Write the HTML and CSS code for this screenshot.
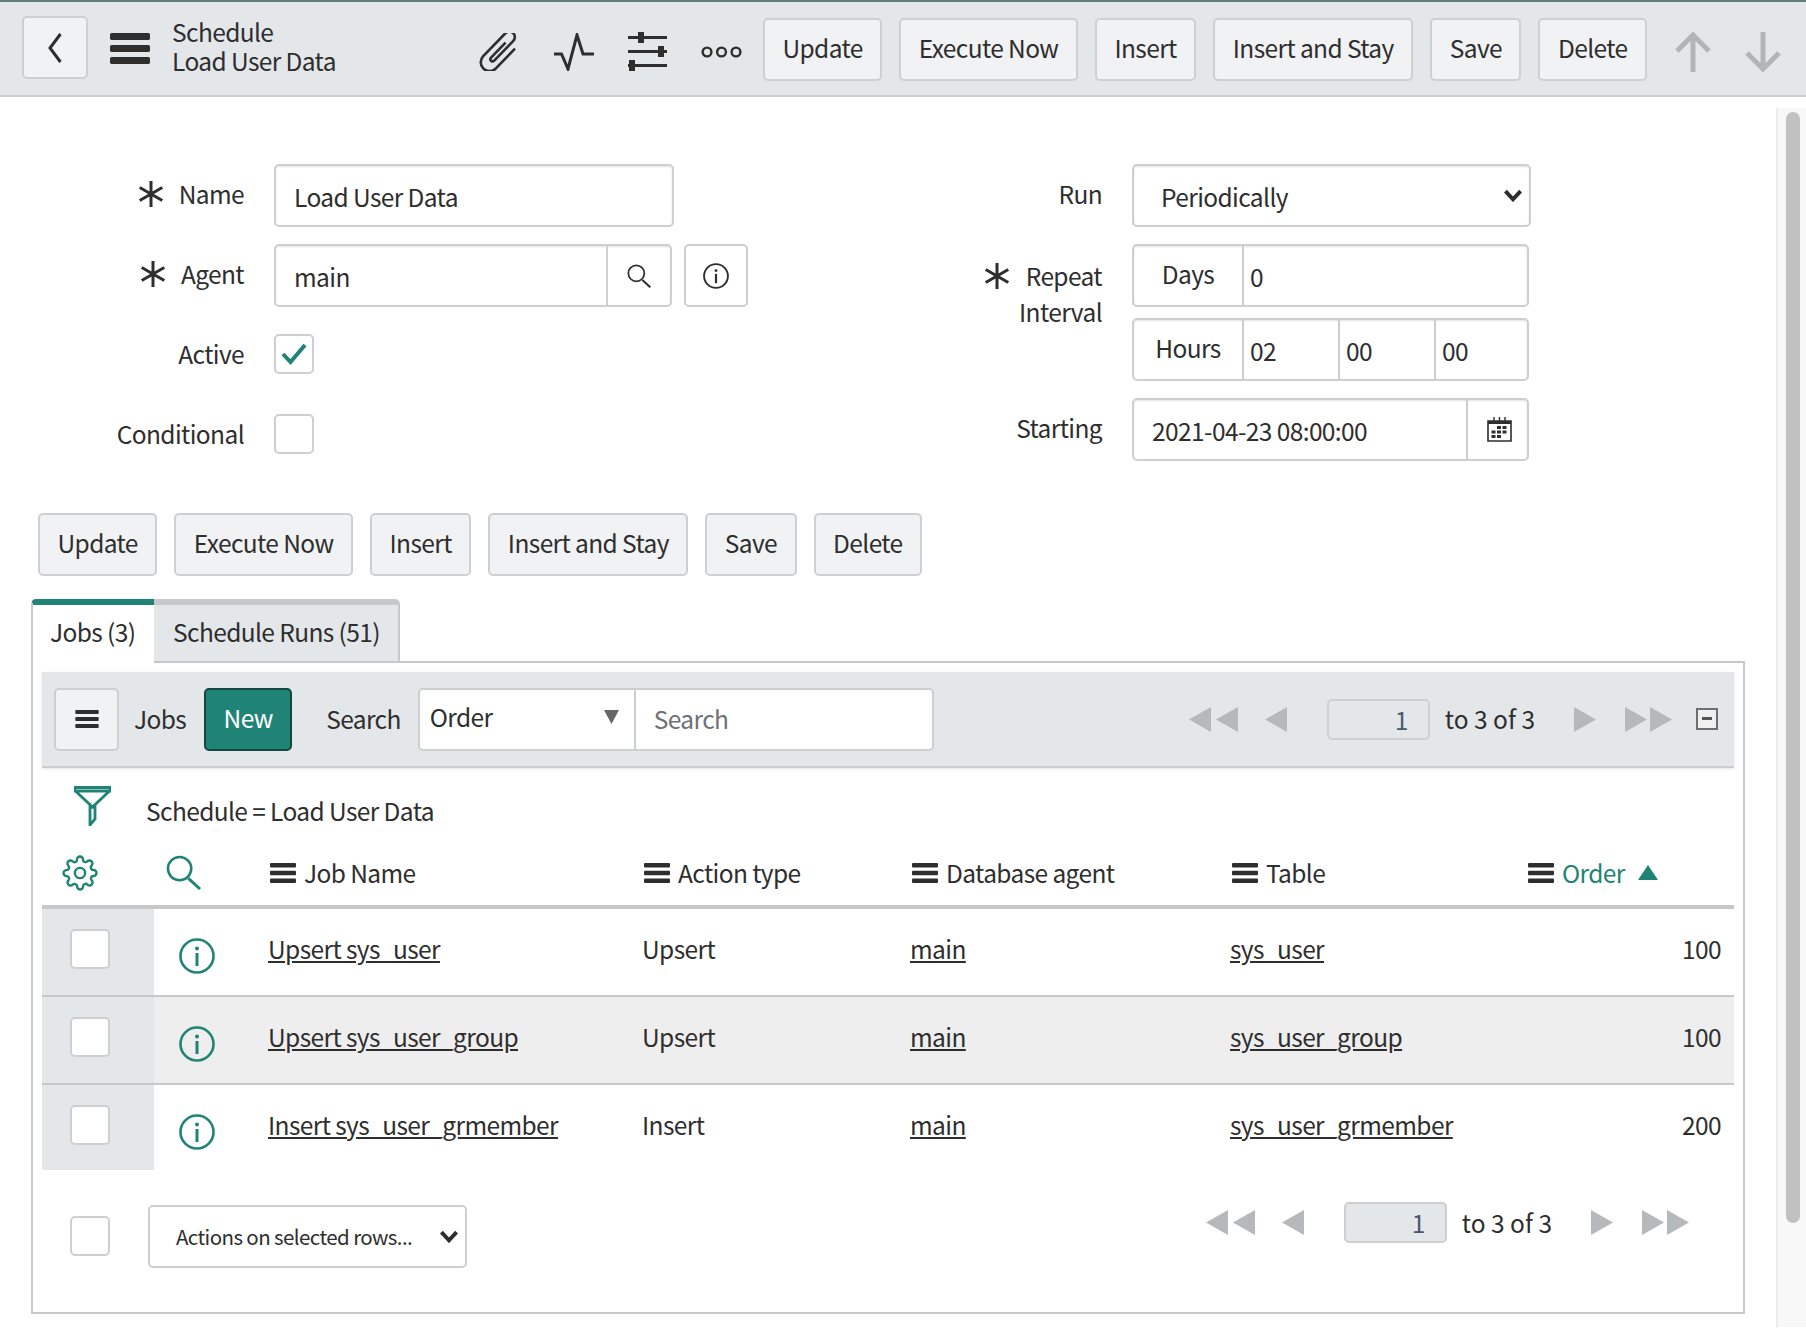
FILE: index.html
```html
<!DOCTYPE html>
<html lang="en">
<head>
    <meta charset="UTF-8">
    <title>Schedule - Load User Data</title>
    <link rel="stylesheet" href="styles.css">
</head>
<body>
    <svg class="sprite" aria-hidden="true">
        <symbol id="i-bars" viewBox="0 0 26 20">
            <rect x="0" y="0" width="26" height="4.4" rx="1"/>
            <rect x="0" y="7.8" width="26" height="4.4" rx="1"/>
            <rect x="0" y="15.6" width="26" height="4.4" rx="1"/>
        </symbol>
        <symbol id="i-star" viewBox="0 0 26 26">
            <path d="M13 0V26M1.7 6.5L24.3 19.5M1.7 19.5L24.3 6.5" fill="none" stroke="currentColor" stroke-width="3"/>
        </symbol>
        <symbol id="i-info" viewBox="0 0 36 36">
            <circle cx="18" cy="18" r="16.5" fill="none" stroke="currentColor" stroke-width="2.6"/>
            <circle cx="18" cy="10.5" r="2"/>
            <rect x="16.5" y="15" width="3" height="13"/>
        </symbol>
        <symbol id="i-search" viewBox="0 0 36 36">
            <circle cx="14" cy="14" r="12" fill="none" stroke="currentColor" stroke-width="2.6"/>
            <path d="M23 24L35 35" fill="none" stroke="currentColor" stroke-width="3"/>
        </symbol>
        <symbol id="i-chevron" viewBox="0 0 18 12">
            <path d="M2 2L9 9.5L16 2" fill="none" stroke="currentColor" stroke-width="3.6"/>
        </symbol>
        <symbol id="i-left2" viewBox="0 0 49 25">
            <path d="M0 12.5L22 0V25ZM27 12.5L49 0V25Z"/>
        </symbol>
        <symbol id="i-left" viewBox="0 0 22 25">
            <path d="M0 12.5L22 0V25Z"/>
        </symbol>
        <symbol id="i-right" viewBox="0 0 22 25">
            <path d="M22 12.5L0 0V25Z"/>
        </symbol>
        <symbol id="i-right2" viewBox="0 0 47 25">
            <path d="M22 12.5L0 0V25ZM47 12.5L25 0V25Z"/>
        </symbol>
    </svg>

    <header class="topbar">
        <button class="btn back-btn">
            <svg width="16" height="32" viewBox="0 0 16 32"><path d="M13.5 2L3 16L13.5 30" fill="none" stroke="#2e2e2e" stroke-width="3"/></svg>
        </button>
        <svg class="top-menu" width="40" height="31"><use href="#i-bars"/></svg>
        <div class="title">
            <div>Schedule</div>
            <div>Load User Data</div>
        </div>
        <div class="top-icons">
            <svg width="41" height="38" viewBox="0 0 41 38">
                <g transform="translate(20.5 19) rotate(44) scale(1.1) translate(-20 -22)" fill="none" stroke="#2e2e2e" stroke-width="2.4">
                    <path d="M28 10V35a8 8 0 0 1-16 0V6a5 5 0 0 1 10 0V31a2 2 0 0 1-4 0V12"/>
                </g>
            </svg>
            <svg width="40" height="38" viewBox="0 0 40 38"><path d="M0 21H7.5L14 36L23 2L29 21H40" fill="none" stroke="#2e2e2e" stroke-width="3"/></svg>
            <svg width="39" height="39" viewBox="0 0 39 39" fill="#2e2e2e">
                <rect x="0" y="4" width="39" height="3"/><rect x="10" y="0" width="6" height="11"/>
                <rect x="0" y="18" width="39" height="3"/><rect x="30" y="14" width="6" height="11"/>
                <rect x="0" y="32" width="39" height="3"/><rect x="1" y="28" width="6" height="11"/>
            </svg>
            <svg width="41" height="12" viewBox="0 0 41 12" fill="none" stroke="#2e2e2e" stroke-width="2.4">
                <circle cx="6" cy="6" r="4.4"/><circle cx="20.500" cy="6" r="4.4"/><circle cx="35" cy="6" r="4.4"/>
            </svg>
        </div>
        <div class="btn-row top-actions">
            <button class="btn">Update</button>
            <button class="btn">Execute Now</button>
            <button class="btn">Insert</button>
            <button class="btn">Insert and Stay</button>
            <button class="btn">Save</button>
            <button class="btn">Delete</button>
        </div>
        <div class="nav-arrows">
            <svg width="36" height="40" viewBox="0 0 36 40"><path d="M18 40V3M2 19L18 3L34 19" fill="none" stroke="#b2b5b8" stroke-width="5"/></svg>
            <svg width="36" height="40" viewBox="0 0 36 40"><path d="M18 0V37M2 21L18 37L34 21" fill="none" stroke="#b2b5b8" stroke-width="5"/></svg>
        </div>
    </header>

    <div class="workspace">
        <main class="main">
            <section class="form">
                <div class="form-left">
                    <div class="field">
                        <label class="field-label"><svg class="req"><use href="#i-star"/></svg>Name</label>
                        <div class="box name-box"><span class="box-text">Load User Data</span></div>
                    </div>
                    <div class="field">
                        <label class="field-label"><svg class="req"><use href="#i-star"/></svg>Agent</label>
                        <div class="box agent-box">
                            <span class="box-text">main</span>
                            <span class="box-addon"><svg width="24" height="24"><use href="#i-search"/></svg></span>
                        </div>
                        <div class="box info-box"><svg width="26" height="26"><use href="#i-info"/></svg></div>
                    </div>
                    <div class="field">
                        <label class="field-label">Active</label>
                        <div class="check">
                            <svg width="26" height="22" viewBox="0 0 26 22"><path d="M2 11L9.500 19L24 2" fill="none" stroke="#1f8476" stroke-width="4"/></svg>
                        </div>
                    </div>
                    <div class="field">
                        <label class="field-label">Conditional</label>
                        <div class="check"></div>
                    </div>
                </div>
                <div class="form-right">
                    <div class="field">
                        <label class="field-label">Run</label>
                        <div class="box run-box">
                            <span class="box-text run-text">Periodically</span>
                            <svg class="chevron" width="20" height="13"><use href="#i-chevron"/></svg>
                        </div>
                    </div>
                    <div class="field interval-field">
                        <label class="field-label interval-label"><svg class="req"><use href="#i-star"/></svg>Repeat<br>Interval</label>
                        <div class="interval-boxes">
                            <div class="box time-box">
                                <span class="time-name">Days</span>
                                <span class="time-part">0</span>
                            </div>
                            <div class="box time-box">
                                <span class="time-name">Hours</span>
                                <span class="time-part time-small">02</span>
                                <span class="time-part time-small">00</span>
                                <span class="time-part">00</span>
                            </div>
                        </div>
                    </div>
                    <div class="field">
                        <label class="field-label">Starting</label>
                        <div class="box time-box">
                            <span class="box-text start-text">2021-04-23 08:00:00</span>
                            <span class="box-addon cal-addon">
                                <svg width="25" height="25" viewBox="0 0 25 25" fill="#2e2e2e">
                                    <path d="M1 4H24V24H1Z" fill="none" stroke="#2e2e2e" stroke-width="1.600"/>
                                    <rect x="1" y="4" width="23" height="3"/>
                                    <path d="M7 0V5M12.500 0V5M18 0V5" stroke="#2e2e2e" stroke-width="1.400"/>
                                    <rect x="10" y="9" width="4" height="3"/><rect x="15.500" y="9" width="4" height="3"/>
                                    <rect x="4.500" y="13.500" width="4" height="3"/><rect x="10" y="13.500" width="4" height="3"/><rect x="15.500" y="13.500" width="4" height="3"/>
                                    <rect x="4.500" y="18" width="4" height="3"/><rect x="10" y="18" width="4" height="3"/>
                                </svg>
                            </span>
                        </div>
                    </div>
                </div>
            </section>

            <div class="btn-row bottom-actions">
                <button class="btn">Update</button>
                <button class="btn">Execute Now</button>
                <button class="btn">Insert</button>
                <button class="btn">Insert and Stay</button>
                <button class="btn">Save</button>
                <button class="btn">Delete</button>
            </div>

            <nav class="tabs">
                <div class="tab tab-active">Jobs (3)</div>
                <div class="tab">Schedule Runs (51)</div>
            </nav>

            <section class="panel">
                <div class="list-bar">
                    <button class="btn list-menu"><svg width="24" height="18"><use href="#i-bars"/></svg></button>
                    <span class="list-title">Jobs</span>
                    <button class="btn new-btn">New</button>
                    <span class="search-label">Search</span>
                    <div class="search-group">
                        <div class="search-col">
                            <span>Order</span>
                            <svg width="15" height="14" viewBox="0 0 15 14"><path d="M0 0H15L7.500 14Z" fill="#666"/></svg>
                        </div>
                        <div class="search-input">Search</div>
                    </div>
                    <div class="pager">
                        <svg class="tri2"><use href="#i-left2"/></svg>
                        <svg class="tri"><use href="#i-left"/></svg>
                        <div class="page-input">1</div>
                        <span class="page-text">to 3 of 3</span>
                        <svg class="tri"><use href="#i-right"/></svg>
                        <svg class="tri2"><use href="#i-right2"/></svg>
                    </div>
                    <div class="collapse-box"></div>
                </div>

                <div class="filter-row">
                    <svg width="37" height="40" viewBox="0 0 37 40" fill="none" stroke="#1f8476" stroke-width="2.800">
                        <path d="M1 1.500H36V5H1ZM1.500 5L18.500 21L35.500 5"/>
                        <path d="M16 21H21V33L16 39Z"/>
                    </svg>
                    <span>Schedule = Load User Data</span>
                </div>

                <table class="jobs">
                    <colgroup>
                        <col class="col-check"><col class="col-info"><col class="col-name">
                        <col class="col-action"><col class="col-agent"><col class="col-table"><col class="col-order">
                    </colgroup>
                    <thead>
                        <tr>
                            <th class="gear-cell">
                                <svg class="gear" width="36" height="36" viewBox="0 0 24 24" fill="none" stroke="#1f8476" stroke-width="1.600">
                                    <circle cx="12" cy="12" r="3.400"/>
                                    <path d="M19.4 15a1.65 1.65 0 0 0 .33 1.82l.06.06a2 2 0 0 1 0 2.83 2 2 0 0 1-2.83 0l-.06-.06a1.65 1.65 0 0 0-1.82-.33 1.65 1.65 0 0 0-1 1.51V21a2 2 0 0 1-2 2 2 2 0 0 1-2-2v-.09A1.65 1.65 0 0 0 9 19.4a1.65 1.65 0 0 0-1.82.33l-.06.06a2 2 0 0 1-2.83 0 2 2 0 0 1 0-2.83l.06-.06a1.65 1.65 0 0 0 .33-1.82 1.65 1.65 0 0 0-1.51-1H3a2 2 0 0 1-2-2 2 2 0 0 1 2-2h.09A1.65 1.65 0 0 0 4.600 9a1.65 1.65 0 0 0-.33-1.82l-.06-.06a2 2 0 0 1 0-2.83 2 2 0 0 1 2.83 0l.06.06a1.65 1.65 0 0 0 1.82.33H9a1.65 1.65 0 0 0 1-1.51V3a2 2 0 0 1 2-2 2 2 0 0 1 2 2v.09a1.65 1.65 0 0 0 1 1.51 1.65 1.65 0 0 0 1.82-.33l.06-.06a2 2 0 0 1 2.83 0 2 2 0 0 1 0 2.83l-.06.06a1.65 1.65 0 0 0-.33 1.82V9a1.65 1.65 0 0 0 1.51 1H21a2 2 0 0 1 2 2 2 2 0 0 1-2 2h-.09a1.65 1.65 0 0 0-1.51 1z"/>
                                </svg>
                            </th>
                            <th class="find-cell"><svg class="teal" width="35" height="35"><use href="#i-search"/></svg></th>
                            <th><span class="th-in"><svg width="26" height="20"><use href="#i-bars"/></svg>Job Name</span></th>
                            <th><span class="th-in"><svg width="26" height="20"><use href="#i-bars"/></svg>Action type</span></th>
                            <th><span class="th-in"><svg width="26" height="20"><use href="#i-bars"/></svg>Database agent</span></th>
                            <th><span class="th-in"><svg width="26" height="20"><use href="#i-bars"/></svg>Table</span></th>
                            <th><span class="th-in sorted"><svg width="26" height="20"><use href="#i-bars"/></svg>Order<i class="sort-up"></i></span></th>
                        </tr>
                    </thead>
                    <tbody>
                        <tr>
                            <td class="check-cell"><div class="check"></div></td>
                            <td class="info-cell"><svg class="teal" width="36" height="36"><use href="#i-info"/></svg></td>
                            <td><a href="#">Upsert sys_user</a></td>
                            <td>Upsert</td>
                            <td><a href="#">main</a></td>
                            <td><a href="#">sys_user</a></td>
                            <td class="num">100</td>
                        </tr>
                        <tr>
                            <td class="check-cell"><div class="check"></div></td>
                            <td class="info-cell"><svg class="teal" width="36" height="36"><use href="#i-info"/></svg></td>
                            <td><a href="#">Upsert sys_user_group</a></td>
                            <td>Upsert</td>
                            <td><a href="#">main</a></td>
                            <td><a href="#">sys_user_group</a></td>
                            <td class="num">100</td>
                        </tr>
                        <tr>
                            <td class="check-cell"><div class="check"></div></td>
                            <td class="info-cell"><svg class="teal" width="36" height="36"><use href="#i-info"/></svg></td>
                            <td><a href="#">Insert sys_user_grmember</a></td>
                            <td>Insert</td>
                            <td><a href="#">main</a></td>
                            <td><a href="#">sys_user_grmember</a></td>
                            <td class="num">200</td>
                        </tr>
                    </tbody>
                </table>

                <div class="list-foot">
                    <div class="check"></div>
                    <div class="box actions-box">
                        <span>Actions on selected rows...</span>
                        <svg class="chevron" width="20" height="13"><use href="#i-chevron"/></svg>
                    </div>
                    <div class="pager foot-pager">
                        <svg class="tri2"><use href="#i-left2"/></svg>
                        <svg class="tri"><use href="#i-left"/></svg>
                        <div class="page-input">1</div>
                        <span class="page-text">to 3 of 3</span>
                        <svg class="tri"><use href="#i-right"/></svg>
                        <svg class="tri2"><use href="#i-right2"/></svg>
                    </div>
                </div>
            </section>
        </main>

        <aside class="scrollbar"><div class="thumb"></div></aside>
    </div>
</body>
</html>
```

FILE: styles.css
```css
* {
    box-sizing: border-box;
}
html, body {
    margin: 0;
    height: 1340px;
    overflow: hidden;
}
body {
    font-family: "Noto Sans CJK SC", "Open Sans", sans-serif;
    font-size: 24.5px;
    letter-spacing: -0.6px;
    line-height: 36px;
    color: #2e2e2e;
    background-color: white;
}
.sprite {
    display: none;
}
svg {
    display: block;
    flex: none;
}
use {
    fill: currentColor;
}
.teal {
    color: #1f8476;
}

/* buttons */
.btn {
    font: inherit;
    letter-spacing: inherit;
    color: inherit;
    height: 63px;
    padding: 0 17.5px 3px;
    background-color: #f1f2f4;
    border: 2px solid #cdcfd1;
    border-radius: 5px;
    white-space: nowrap;
}
.btn-row {
    display: flex;
    gap: 17px;
}

/* top bar */
.topbar {
    display: flex;
    align-items: flex-start;
    height: 97px;
    padding: 14px 0 0 22px;
    background-color: #e4e7ea;
    border-top: 2px solid #5f8277;
    border-bottom: 2px solid #cbcdcf;
}
.back-btn {
    display: flex;
    align-items: center;
    justify-content: center;
    width: 66px;
    padding: 0;
}
.top-menu {
    margin: 17px 0 0 22px;
}
.title {
    margin: 1px 0 0 22px;
    line-height: 29px;
}
.top-icons {
    display: flex;
    align-items: center;
    gap: 34px;
    height: 39px;
    margin: 16px 0 0 auto;
}
.top-actions {
    margin: 2px 0 0 21px;
}
.nav-arrows {
    display: flex;
    gap: 34px;
    margin: 16px 25px 0 28px;
}

/* form */
.workspace {
    display: flex;
}
.main {
    width: 1776px;
    flex: none;
}
.form {
    display: flex;
    padding-top: 67px;
}
.form-left {
    display: flex;
    flex-direction: column;
    gap: 17px;
    width: 840px;
}
.form-right {
    display: flex;
    flex-direction: column;
    gap: 17px;
}
.field {
    display: flex;
    align-items: flex-start;
    min-height: 63px;
}
.field-label {
    display: flex;
    align-items: center;
    justify-content: flex-end;
    gap: 15px;
    width: 244px;
    height: 60px;
    margin-right: 30px;
}
.form-right .field-label {
    width: 262px;
    margin-right: 30px;
}
.req {
    width: 26px;
    height: 26px;
}
.box {
    display: flex;
    align-items: center;
    height: 63px;
    background-color: white;
    border: 2px solid #cdcfd1;
    border-radius: 5px;
    box-shadow: inset 0 1px 2px rgba(0, 0, 0, 0.12);
}
.box-text {
    flex: 1;
    padding: 2px 0 0 18px;
}
.name-box {
    width: 400px;
}
.agent-box {
    width: 398px;
}
.box-addon {
    display: flex;
    align-items: center;
    justify-content: center;
    width: 64px;
    height: 100%;
    border-left: 2px solid #cdcfd1;
}
.info-box {
    justify-content: center;
    width: 64px;
    margin-left: 12px;
    box-shadow: none;
}
.check {
    display: flex;
    align-items: center;
    justify-content: center;
    width: 40px;
    height: 40px;
    margin-top: 10px;
    background-color: white;
    border: 2px solid #cdcfd1;
    border-radius: 5px;
}
.run-box {
    justify-content: space-between;
    width: 399px;
    padding-right: 6px;
}
.run-text {
    padding-left: 27px;
}
.interval-field {
    height: 137px;
}
.interval-label {
    display: block;
    height: auto;
    padding-top: 14px;
    text-align: right;
    position: relative;
}
.interval-label .req {
    position: absolute;
    left: 144px;
    top: 19px;
}
.interval-boxes {
    display: flex;
    flex-direction: column;
    gap: 11px;
}
.time-box {
    width: 397px;
}
.time-name {
    display: flex;
    align-items: center;
    justify-content: center;
    width: 108px;
    height: 100%;
    flex: none;
    padding-bottom: 3px;
}
.time-part {
    display: flex;
    align-items: center;
    flex: 1;
    height: 100%;
    padding: 2px 0 0 6px;
    border-left: 2px solid #cdcfd1;
}
.time-small {
    flex: none;
    width: 96px;
}
.start-text {
    white-space: nowrap;
}
.cal-addon {
    width: 61px;
    padding-left: 3px;
}

.bottom-actions {
    margin: 46px 0 0 38px;
}

/* tabs */
.tabs {
    display: flex;
    margin: 23px 0 -2px 31px;
    position: relative;
}
.tab {
    height: 64px;
    padding: 0 18px 0 19px;
    line-height: 53px;
    background-color: #e4e7ea;
    border-top: 6px solid #c8c8c8;
    border-right: 2px solid #c8c8c8;
    border-bottom: 2px solid #c8c8c8;
    border-radius: 0 5px 0 0;
    white-space: nowrap;
}
.tab-active {
    width: 123px;
    padding: 0 0 0 17px;
    background-color: white;
    border-top-color: #1f8476;
    border-left: 2px solid #c8c8c8;
    border-right: none;
    border-bottom: none;
    border-radius: 5px 0 0 0;
}

/* list */
.panel {
    margin: 0 31px;
    height: 653px;
    padding: 9px 9px 0;
    border: 2px solid #c8c8c8;
}
.list-bar {
    display: flex;
    align-items: center;
    height: 96px;
    padding: 0 16px 0 12px;
    background-color: #e4e7ea;
    border-bottom: 2px solid #cbcdcf;
    box-shadow: 0 1px 3px rgba(0, 0, 0, 0.1);
}
.list-menu {
    display: flex;
    align-items: center;
    justify-content: center;
    width: 65px;
    padding: 0;
}
.list-title {
    margin-left: 15px;
}
.new-btn {
    width: 88px;
    padding: 0 0 3px;
    margin-left: 18px;
    color: white;
    background-color: #1f8476;
    border-color: #12483f;
}
.search-label {
    margin-left: 34px;
}
.search-group {
    display: flex;
    height: 63px;
    margin-left: 17px;
    background-color: white;
    border: 2px solid #cdcfd1;
    border-radius: 5px;
}
.search-col {
    display: flex;
    align-items: center;
    justify-content: space-between;
    width: 216px;
    padding: 0 15px 5px 10px;
    border-right: 2px solid #cdcfd1;
}
.search-input {
    display: flex;
    align-items: center;
    width: 296px;
    padding-left: 18px;
    color: #6d7175;
}
.pager {
    display: flex;
    align-items: center;
    margin-left: auto;
    color: #b6b9bb;
}
.tri2 {
    width: 49px;
    height: 25px;
}
.tri {
    width: 22px;
    height: 25px;
    margin-left: 27px;
}
.tri + .tri2 {
    margin-left: 28px;
}
.page-input {
    width: 103px;
    height: 41px;
    margin-left: 40px;
    padding-right: 20px;
    line-height: 37px;
    text-align: right;
    color: #48586a;
    background-color: #e4e7ea;
    border: 2px solid #cdcfd1;
    border-radius: 5px;
}
.page-text {
    margin: 0 39px 0 15px;
    color: #2e2e2e;
    letter-spacing: 0;
    white-space: nowrap;
}
.page-text + .tri {
    margin-left: 0;
}
.collapse-box {
    position: relative;
    width: 22px;
    height: 22px;
    margin-left: 23px;
    background-color: #eef0f2;
    border: 2px solid #6e6e6e;
}
.collapse-box::after {
    content: "";
    position: absolute;
    left: 4px;
    top: 7px;
    width: 10px;
    height: 3px;
    background-color: #555;
}
.filter-row {
    display: flex;
    align-items: flex-start;
    height: 78px;
    padding: 18px 0 0 32px;
}
.filter-row span {
    margin: 7px 0 0 35px;
}

/* table */
.jobs {
    width: 1692px;
    table-layout: fixed;
    border-collapse: separate;
    border-spacing: 0;
}
.col-check { width: 112px; }
.col-info { width: 104px; }
.col-name { width: 374px; }
.col-action { width: 268px; }
.col-agent { width: 320px; }
.col-table { width: 296px; }
.col-order { width: 218px; }
.jobs th {
    height: 63px;
    padding: 0 0 6px 12px;
    font-weight: normal;
    text-align: left;
    border-bottom: 4px solid #c8c8c8;
}
.th-in {
    display: flex;
    align-items: center;
    gap: 8px;
    white-space: nowrap;
}
.sorted {
    color: #1f8476;
}
.sorted svg {
    color: #2e2e2e;
}
.sort-up {
    width: 0;
    height: 0;
    margin-left: 5px;
    border-left: 10px solid transparent;
    border-right: 10px solid transparent;
    border-bottom: 15px solid #1f8476;
}
.jobs .gear-cell {
    padding-left: 20px;
}
.jobs td {
    height: 88px;
    padding: 0 0 6px 10px;
    border-bottom: 2px solid #c8c8c8;
}
.jobs tbody tr:last-child td {
    height: 85px;
    border-bottom: none;
}
.jobs tbody tr:nth-child(2) td {
    background-color: #eeeeee;
}
.jobs a {
    color: inherit;
}
.jobs .check-cell {
    padding: 0 0 6px 28px;
    background-color: #e4e7ea;
}
.jobs tbody tr:nth-child(2) .check-cell {
    background-color: #e4e7ea;
}
.check-cell .check {
    margin-top: 0;
}
.jobs .info-cell {
    padding: 8px 0 0 25px;
}
.jobs .num {
    padding-right: 13px;
    text-align: right;
}
.list-foot {
    display: flex;
    align-items: center;
    padding: 32px 44px 0 28px;
}
.list-foot .check {
    margin-top: 0;
}
.actions-box {
    justify-content: space-between;
    width: 319px;
    margin-left: 38px;
    padding: 0 6px 0 26px;
    font-size: 20.5px;
    white-space: nowrap;
    box-shadow: none;
}
.foot-pager {
    margin-bottom: 27px;
}

/* scrollbar */
.scrollbar {
    width: 30px;
    height: 1219px;
    margin-top: 11px;
    padding: 4px 6px 0 8px;
    background-color: #f8f8f8;
    border-left: 2px solid #ececec;
}
.thumb {
    height: 1111px;
    background-color: #c1c1c1;
    border-radius: 8px;
}
```
